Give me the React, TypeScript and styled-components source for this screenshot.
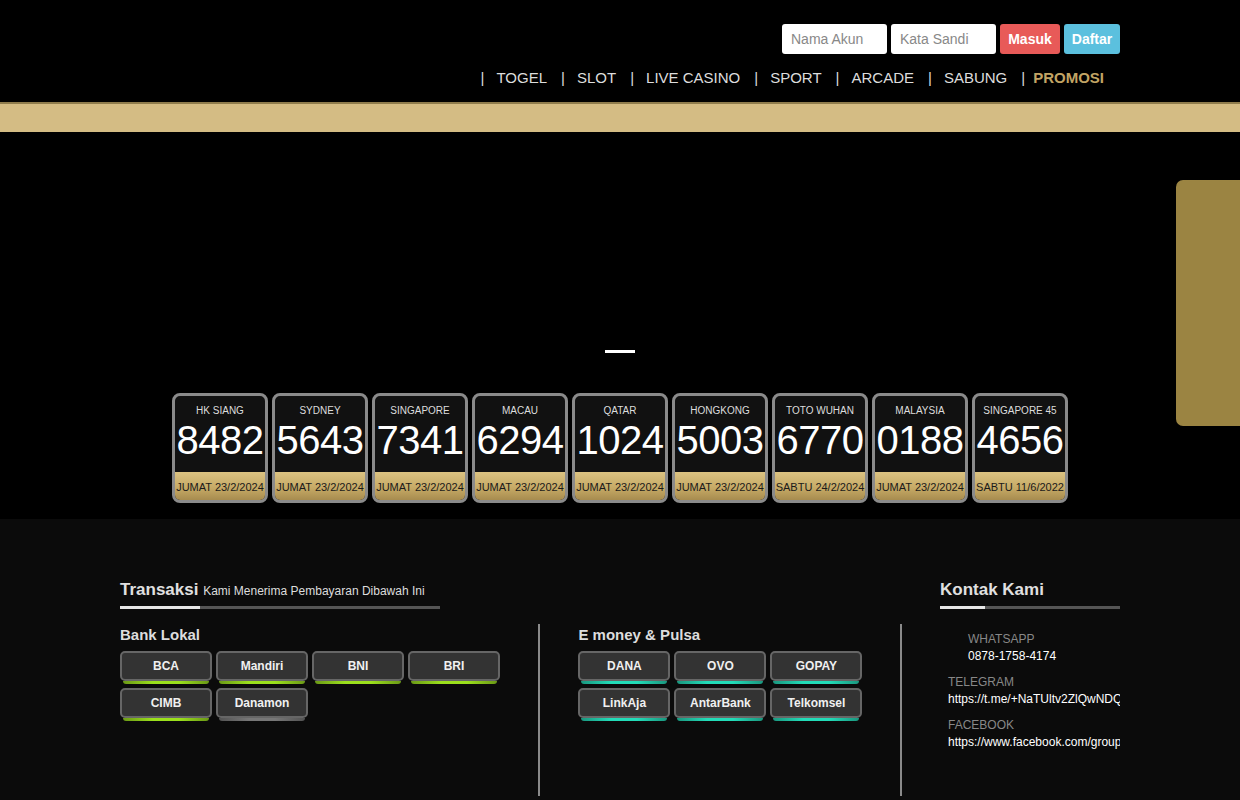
import styled, { createGlobalStyle } from 'styled-components'

const GlobalStyle = createGlobalStyle`
  body {
    margin: 0;
    background: #000;
    font-family: "Liberation Sans", Arial, sans-serif;
  }
  * { box-sizing: border-box; }
`

const Header = styled.header`
  background: #000;
  height: 102px;
`

const HeaderInner = styled.div`
  width: 1000px;
  margin: 0 auto;
  display: flex;
  flex-direction: column;
  align-items: flex-end;
  padding-top: 24px;
`

const LoginForm = styled.form`
  display: flex;
  gap: 4px;
`

const Field = styled.input`
  width: 105px;
  height: 30px;
  border: none;
  border-radius: 3px;
  padding: 0 9px;
  font-family: "Liberation Sans", Arial, sans-serif;
  font-size: 14px;
  background: #fff;
  &::placeholder { color: #888; }
`

const AuthButton = styled.button<{ $bg: string; $w: number }>`
  width: ${p => p.$w}px;
  height: 30px;
  border: none;
  border-radius: 3px;
  background: ${p => p.$bg};
  color: #fff;
  font-family: "Liberation Sans", Arial, sans-serif;
  font-weight: bold;
  font-size: 14px;
  padding: 0;
`

const Nav = styled.nav`
  display: flex;
  align-items: center;
  margin-top: 15px;
  padding-right: 16px;
  font-size: 15px;
  color: #ddd;
`

const NavItem = styled.a<{ $promo?: boolean }>`
  display: flex;
  align-items: center;
  color: ${p => (p.$promo ? '#c2a464' : '#ddd')};
  font-weight: ${p => (p.$promo ? 'bold' : 'normal')};
  text-decoration: none;
  &::before {
    content: '|';
    color: #ddd;
    font-weight: normal;
    margin-right: ${p => (p.$promo ? '8px' : '12px')};
  }
  & + & { margin-left: 14px; }
`

const GoldBand = styled.div`
  height: 30px;
  border-top: 2px solid #8f7c4c;
  background: #d4bc84;
`

const Hero = styled.section`
  position: relative;
  background: #000;
  height: 387px;
  display: flex;
  flex-direction: column;
  align-items: center;
  padding-top: 218px;
`

const SideTab = styled.div`
  position: absolute;
  right: 0;
  top: 48px;
  width: 64px;
  height: 246px;
  background: #9b8442;
  border-radius: 7px 0 0 7px;
`

const SlideDot = styled.span`
  width: 30px;
  height: 3px;
  background: #fff;
`

const Results = styled.div`
  display: flex;
  gap: 4px;
  margin-top: 40px;
`

const ResultCard = styled.div`
  width: 96px;
  height: 110px;
  border: 3px solid #8a8a8a;
  border-radius: 8px;
  background: #111;
  overflow: hidden;
  display: flex;
  flex-direction: column;
  align-items: center;
`

const Market = styled.div`
  color: #ddd;
  font-size: 10px;
  margin-top: 9px;
  height: 12px;
`

const Number = styled.div`
  color: #fff;
  font-size: 40px;
  line-height: 44px;
  margin-top: 1px;
  letter-spacing: -0.5px;
`

const DateBar = styled.div`
  margin-top: auto;
  width: 100%;
  height: 28px;
  background: linear-gradient(#dcc382 0%, #c4a864 60%, #a78c4f 100%);
  color: #1a1a1a;
  font-size: 11px;
  display: flex;
  align-items: center;
  justify-content: center;
  padding-top: 2px;
  white-space: nowrap;
`

const Footer = styled.footer`
  background: #0b0b0b;
  height: 281px;
  padding-top: 61px;
`

const FooterInner = styled.div`
  width: 1000px;
  margin: 0 auto;
  display: grid;
  grid-template-columns: 782px 180px;
  column-gap: 38px;
`

const SectionTitle = styled.h3<{ $lineWidth: number; $accent: number }>`
  margin: 0;
  color: #e0e0e0;
  font-size: 17px;
  font-weight: bold;
  padding-bottom: 6px;
  width: ${p => p.$lineWidth}px;
  border-bottom: 3px solid #555;
  position: relative;
  &::after {
    content: '';
    position: absolute;
    left: 0;
    bottom: -3px;
    width: ${p => p.$accent}px;
    height: 3px;
    background: #e6e6e6;
  }
  small {
    font-size: 12px;
    font-weight: normal;
    color: #ddd;
  }
`

const PayRow = styled.div`
  display: flex;
  margin-top: 15px;
`

const PayGroup = styled.div<{ $w: number; $pl: number }>`
  width: ${p => p.$w}px;
  padding-left: ${p => p.$pl}px;
  height: 172px;
  border-right: 2px solid #8a8a8a;
`

const GroupTitle = styled.h4`
  margin: 2px 0 8px;
  color: #ddd;
  font-size: 15px;
  font-weight: bold;
`

const ButtonGrid = styled.div`
  display: flex;
  flex-wrap: wrap;
  gap: 7px 4px;
`

const PayButton = styled.div<{ $glow: string }>`
  position: relative;
  width: 92px;
  height: 30px;
  border: 2px solid #666;
  border-radius: 5px;
  background: #333;
  color: #f0f0f0;
  font-size: 12px;
  font-weight: bold;
  display: flex;
  align-items: center;
  justify-content: center;
  &::after {
    content: '';
    position: absolute;
    left: 1px;
    right: 1px;
    bottom: -5px;
    height: 3px;
    border-radius: 0 0 3px 3px;
    background: linear-gradient(90deg, ${p => p.$glow}aa, ${p => p.$glow} 35%, ${p => p.$glow} 65%, ${p => p.$glow}aa);
  }
`

const Contact = styled.div`
  overflow: hidden;
`

const ContactList = styled.div`
  margin-top: 23px;
  display: flex;
  flex-direction: column;
  gap: 11px;
`

const ContactItem = styled.div<{ $indent: number }>`
  padding-left: ${p => p.$indent}px;
  font-size: 12px;
  line-height: 15px;
  white-space: nowrap;
  span { display: block; color: #888; }
  a { display: block; color: #fff; text-decoration: none; margin-top: 2px; }
`

const navLinks = ['TOGEL', 'SLOT', 'LIVE CASINO', 'SPORT', 'ARCADE', 'SABUNG']

const results = [
  { market: 'HK SIANG', num: '8482', date: 'JUMAT 23/2/2024' },
  { market: 'SYDNEY', num: '5643', date: 'JUMAT 23/2/2024' },
  { market: 'SINGAPORE', num: '7341', date: 'JUMAT 23/2/2024' },
  { market: 'MACAU', num: '6294', date: 'JUMAT 23/2/2024' },
  { market: 'QATAR', num: '1024', date: 'JUMAT 23/2/2024' },
  { market: 'HONGKONG', num: '5003', date: 'JUMAT 23/2/2024' },
  { market: 'TOTO WUHAN', num: '6770', date: 'SABTU 24/2/2024' },
  { market: 'MALAYSIA', num: '0188', date: 'JUMAT 23/2/2024' },
  { market: 'SINGAPORE 45', num: '4656', date: 'SABTU 11/6/2022' },
]

const banks = [
  { name: 'BCA', glow: '#9be01c' },
  { name: 'Mandiri', glow: '#9be01c' },
  { name: 'BNI', glow: '#9be01c' },
  { name: 'BRI', glow: '#9be01c' },
  { name: 'CIMB', glow: '#9be01c' },
  { name: 'Danamon', glow: '#777777' },
]

const emoney = ['DANA', 'OVO', 'GOPAY', 'LinkAja', 'AntarBank', 'Telkomsel']

const contacts = [
  { label: 'WHATSAPP', value: '0878-1758-4174', indent: 28 },
  { label: 'TELEGRAM', value: 'https://t.me/+NaTUltv2ZlQwNDQ1', indent: 8 },
  { label: 'FACEBOOK', value: 'https://www.facebook.com/groups/', indent: 8 },
]

const App = () => {
  return (
    <>
      <GlobalStyle />
      <Header>
        <HeaderInner>
          <LoginForm onSubmit={e => e.preventDefault()}>
            <Field placeholder='Nama Akun' />
            <Field placeholder='Kata Sandi' type='password' />
            <AuthButton type='button' $bg='#e85a58' $w={60}>Masuk</AuthButton>
            <AuthButton type='button' $bg='#5bc0de' $w={56}>Daftar</AuthButton>
          </LoginForm>
          <Nav>
            {navLinks.map(link => (
              <NavItem key={link} href='#'>{link}</NavItem>
            ))}
            <NavItem href='#' $promo>PROMOSI</NavItem>
          </Nav>
        </HeaderInner>
      </Header>
      <GoldBand />
      <Hero>
        <SideTab />
        <SlideDot />
        <Results>
          {results.map(r => (
            <ResultCard key={r.market}>
              <Market>{r.market}</Market>
              <Number>{r.num}</Number>
              <DateBar>{r.date}</DateBar>
            </ResultCard>
          ))}
        </Results>
      </Hero>
      <Footer>
        <FooterInner>
          <div>
            <SectionTitle $lineWidth={320} $accent={80}>
              Transaksi <small>Kami Menerima Pembayaran Dibawah Ini</small>
            </SectionTitle>
            <PayRow>
              <PayGroup $w={421} $pl={0}>
                <GroupTitle>Bank Lokal</GroupTitle>
                <ButtonGrid>
                  {banks.map(b => (
                    <PayButton key={b.name} $glow={b.glow}>{b.name}</PayButton>
                  ))}
                </ButtonGrid>
              </PayGroup>
              <PayGroup $w={362} $pl={38}>
                <GroupTitle>E money &amp; Pulsa</GroupTitle>
                <ButtonGrid>
                  {emoney.map(n => (
                    <PayButton key={n} $glow='#22dcb8'>{n}</PayButton>
                  ))}
                </ButtonGrid>
              </PayGroup>
            </PayRow>
          </div>
          <Contact>
            <SectionTitle $lineWidth={180} $accent={45}>Kontak Kami</SectionTitle>
            <ContactList>
              {contacts.map(c => (
                <ContactItem key={c.label} $indent={c.indent}>
                  <span>{c.label}</span>
                  <a href='#'>{c.value}</a>
                </ContactItem>
              ))}
            </ContactList>
          </Contact>
        </FooterInner>
      </Footer>
    </>
  )
}

export default App
